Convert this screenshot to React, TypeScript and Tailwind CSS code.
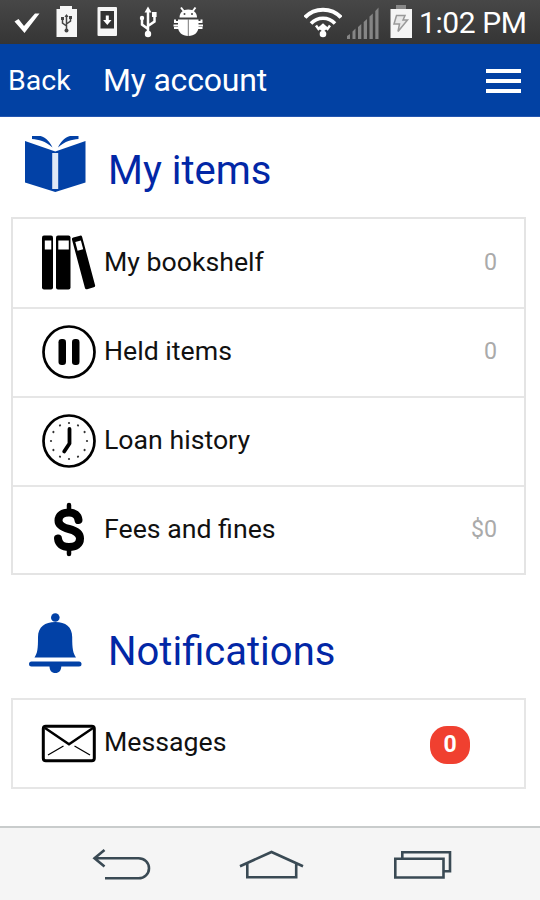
import { FC, ReactNode } from 'react';

const StatusBar: FC = () => (
  <div className="flex h-11 items-center bg-gradient-to-b from-[#474747] to-[#353535] text-white">
    <svg className="ml-[14px] h-11 w-[26px]" viewBox="14 0 26 44">
      <path d="M14.5 21.5 L18.5 19 L24 26 L35 13.5 L39.5 13.5 L24.5 33 Z" fill="#fff" />
    </svg>
    <svg className="ml-4 h-11 w-[21px]" viewBox="56 0 21 44">
      <path d="M60 6h12v3h5v28H56.500V9H60z" fill="#f6f6f6" />
      <path d="M66.500 15v15M66.500 26l-4-3v-4M66.500 24l4-3v-4" fill="none" stroke="#444" strokeWidth="1.500" />
      <path d="M64.500 17l2-3 2 3z" fill="#444" />
      <circle cx="66.500" cy="30.500" r="2" fill="#444" />
      <path d="M61 17h3v3h-3zM69 16h3v3h-3z" fill="#444" />
    </svg>
    <svg className="ml-5 h-11 w-5" viewBox="97 0 20 44">
      <rect x="97.500" y="7" width="19.500" height="29" rx="1" fill="#f6f6f6" />
      <rect x="100.500" y="11" width="13.500" height="17.500" fill="#333" />
      <path d="M105.800 15.500h3v4.500h2.700l-4.200 5-4.200-5h2.700z" fill="#fff" />
    </svg>
    <svg className="ml-[22px] h-11 w-[18px]" viewBox="139 0 18 44">
      <path d="M148 11v22M148 29l-6-4.500V18M148 26l6.500-4.500V15" fill="none" stroke="#fff" strokeWidth="2.500" />
      <path d="M144.500 12.500l3.500-6 3.500 6z" fill="#fff" />
      <circle cx="148" cy="34" r="3.200" fill="#fff" />
      <circle cx="142" cy="18" r="2.200" fill="#fff" />
      <rect x="152" y="12" width="4.600" height="5" fill="#fff" />
    </svg>
    <svg className="ml-4 h-11 w-[31px]" viewBox="173 0 31 44">
      <path d="M179.500 17.500c0-5 3.500-8 8.700-8s8.800 3 8.800 8z" fill="#fff" />
      <path d="M181 7.500l3 4M195.500 7.500l-3 4" stroke="#fff" strokeWidth="2" />
      <path d="M178 19.500h20.500v7.500c0 5-4 9-10.200 9s-10.300-4-10.300-9z" fill="#fff" />
      <path d="M188.300 19v17" stroke="#777" strokeWidth="1" />
      <path d="M179 22h-4v-2.500M179 25.500h-5.500M179 28h-4v-1M197.500 22h4v-2.500M197.500 25.500h5.500M197.500 28h4v-1" fill="none" stroke="#fff" strokeWidth="2" />
      <circle cx="184.500" cy="14" r="1" fill="#444" />
      <circle cx="192" cy="14" r="1" fill="#444" />
    </svg>
    <svg className="ml-[100px] h-11 w-[38px]" viewBox="304 0 38 44">
      <g fill="none" stroke="#fff">
        <path d="M305 17.500c9-10.500 27-10.500 36 0" strokeWidth="4" />
        <path d="M311 23.500c6.500-7 17.500-7 24 0" strokeWidth="3.500" />
        <path d="M316 25.500l2.500 3.500 4.500-4 4.500 4 2.500-3.500" strokeWidth="2.500" />
      </g>
      <path d="M318 28c3-3 7-3 10 0l-5 4z" fill="#fff" />
      <circle cx="323" cy="34" r="3.300" fill="#fff" />
    </svg>
    <svg className="ml-[5px] h-11 w-8" viewBox="347 0 32 44">
      <path d="M347 36l3-2v5h-3zM352.500 31.500l3-3V39h-3zM358 27l3.300-3V39H358zM363.700 22l3.300-3V39h-3.300zM369.500 16.500l3.300-3V39h-3.300zM375.300 11l3.200-3.500V39h-3.200z" fill="#858585" />
    </svg>
    <svg className="ml-[11px] h-11 w-[23px]" viewBox="390 0 23 44">
      <path d="M396 5h10v4h-10z" fill="#888" />
      <path d="M390.500 9h21.500v29h-21.500z" fill="#f5f5f5" />
      <path d="M396.500 15.500h8.500l-2 4.500h4.500l-9.500 11.500 1.500-7.500h-5.500z" fill="#e8e8e8" stroke="#999" strokeWidth="1.500" />
    </svg>
    <span className="ml-[6px] pt-px text-[30px] tracking-[-0.4px]">1:02 PM</span>
  </div>
);

const BookIcon = () => (
  <svg className="h-[58px] w-[62px]" viewBox="24 135 62 58" fill="#0241a6">
    <path d="M25 141l30.300 10.500L85.500 141v41.500L55.300 192 25 182.500z" />
    <path d="M52.200 153h6v36h-6z" fill="#dfe8f6" />
    <path d="M32 136h8.500c6 2 9.500 6 12 11.500C45 141 39 139.500 32 139zM78.500 136H70c-6 2-9.500 6-12 11.500 7.500-6.500 13.500-8 20.500-8.500z" />
  </svg>
);

const BellIcon = () => (
  <svg className="h-[60px] w-[54px]" viewBox="28 613 54 60" fill="#0241a6">
    <circle cx="55.300" cy="617.500" r="4.300" />
    <path d="M38 637c0-10 7-15 17.300-15s16.900 5 16.900 15c0 12 .8 16 3.800 20.500H34.500C37.500 653 38 649 38 637z" />
    <rect x="29" y="661.500" width="52.500" height="5" rx="2.500" />
    <path d="M49.500 666h11.800c0 4.500-2.300 7-6 7s-5.800-2.500-5.800-7z" />
  </svg>
);

const ShelfIcon = () => (
  <svg className="size-14" viewBox="41 234 56 56">
    <rect x="42" y="235.500" width="11" height="54" rx="2" />
    <rect x="56" y="235.500" width="14.500" height="54" rx="2" />
    <rect x="44.800" y="240.500" width="6.500" height="9" fill="#fff" />
    <rect x="58.300" y="240.500" width="10.500" height="9" fill="#fff" />
    <g transform="rotate(-15 77 237)">
      <rect x="71.500" y="236.500" width="10.500" height="53.500" rx="1.800" />
      <rect x="74" y="241.500" width="5.800" height="9" fill="#fff" />
    </g>
  </svg>
);

const PauseIcon = () => (
  <svg className="size-14" viewBox="41 323 56 56">
    <circle cx="69" cy="351" r="25.500" fill="none" stroke="#000" strokeWidth="2.700" />
    <rect x="58.500" y="338" width="7.500" height="26" rx="3.200" />
    <rect x="72" y="338" width="7.500" height="26" rx="3.200" />
  </svg>
);

const ClockIcon = () => (
  <svg className="size-14" viewBox="-28 -28 56 56">
    <circle r="25.500" fill="none" stroke="#000" strokeWidth="2.700" />
    {Array.from({ length: 12 }, (_, i) => (
      <circle key={i} cx="0" cy="-18" r="1.100" fill="#333" transform={`rotate(${i * 30})`} />
    ))}
    <path d="M.500-12V2.500L-4.800 10.500" fill="none" stroke="#000" strokeWidth="3.800" strokeLinecap="round" strokeLinejoin="round" />
  </svg>
);

const DollarIcon = () => (
  <svg className="size-14" viewBox="41 501 56 56" fill="none" stroke="#000" strokeLinecap="round">
    <path d="M69 505v6M69 548v6" strokeWidth="4.500" />
    <path d="M78.500 520c-.5-5-4-7.500-9.500-7.500-6 0-10.500 2.500-10.500 8 0 5 4.500 7 10.500 8.500s11 3.500 11 9.500-4.500 8.500-11 8.500-10.500-3-11-8.500" strokeWidth="8" />
  </svg>
);

const MailIcon = () => (
  <svg className="size-14" viewBox="41 715 56 56" fill="none" stroke="#000">
    <rect x="43.300" y="726.300" width="51" height="34.500" rx="2.500" strokeWidth="3" />
    <path d="M45 728l24 16.300L93 728" strokeWidth="2.500" />
    <path d="M63.500 746L48 755M74.500 746L90 755" strokeWidth="1.300" />
  </svg>
);

interface RowProps {
  icon: ReactNode;
  label: string;
  children?: ReactNode;
}

const Row: FC<RowProps> = ({ icon, label, children }) => (
  <li className="flex h-full items-center border-[#e6e6e6] pb-[2px] pl-7 not-first:border-t-2">
    {icon}
    <span className="ml-[7px] flex-1 pb-px text-[26.7px] leading-8 text-[#111]">{label}</span>
    {children}
  </li>
);

const Count: FC<{ value: string }> = ({ value }) => (
  <span className="mr-[27px] pb-px text-[23.2px] leading-8 text-[#aaa]">{value}</span>
);

const App: FC = () => (
  <div className="flex h-[900px] w-[540px] flex-col overflow-hidden bg-white font-['Roboto',sans-serif]">
    <StatusBar />

    <header className="flex h-[73px] items-center border-b border-[#2456b0] bg-[#0241a3] pl-2 pr-[19px] text-white">
      <span className="w-[95px] pt-[2px] text-[28.5px]">Back</span>
      <h1 className="flex-1 text-[32px] tracking-[-0.2px]">My account</h1>
      <div className="flex flex-col gap-[6px] pt-[2px]">
        <div className="h-1 w-[35px] bg-white" />
        <div className="h-1 w-[35px] bg-white" />
        <div className="h-1 w-[35px] bg-white" />
      </div>
    </header>

    <main className="flex-1">
      <div className="flex h-[100px] pl-6 pt-[18px]">
        <BookIcon />
        <h2 className="ml-[22px] mt-3 text-[40px] leading-[48px] text-[#0227a6]">My items</h2>
      </div>
      <ul className="ml-[11px] grid h-[358px] w-[515px] grid-rows-[88px_89px_89px_88px] border-2 border-[#e4e4e4]">
        <Row icon={<ShelfIcon />} label="My bookshelf">
          <Count value="0" />
        </Row>
        <Row icon={<PauseIcon />} label="Held items">
          <Count value="0" />
        </Row>
        <Row icon={<ClockIcon />} label="Loan history" />
        <Row icon={<DollarIcon />} label="Fees and fines">
          <Count value="$0" />
        </Row>
      </ul>

      <div className="flex h-[123px] pl-7 pt-[38px]">
        <BellIcon />
        <h2 className="ml-[26px] mt-[15px] text-[40px] leading-[48px] text-[#0227a6]">Notifications</h2>
      </div>
      <ul className="ml-[11px] grid h-[91px] w-[515px] border-2 border-[#e6e6e6]">
        <Row icon={<MailIcon />} label="Messages">
          <span className="mr-[54px] mt-[5px] flex h-[38px] w-10 items-center justify-center rounded-[17px] bg-[#f04030] pb-[2px] text-[23px] font-bold leading-none text-white">
            0
          </span>
        </Row>
      </ul>
    </main>

    <nav className="flex h-[74px] border-t-2 border-[#c9cccc] bg-[#f5f5f5] pl-[92px]">
      <svg className="h-[72px] w-[60px]" viewBox="92 828 60 72" fill="none" stroke="#3a4a54" strokeWidth="2.600">
        <path d="M104.500 850l-10 8.200 10 8.200M95 858.200h43.500c6 0 10.500 4.500 10.500 10s-4.500 10.100-10.500 10.100H105" />
      </svg>
      <svg className="ml-[87px] h-[72px] w-[66px]" viewBox="239 828 66 72" fill="none" stroke="#3a4a54" strokeWidth="2.600">
        <path d="M240 866.300l31.500-14.300 31.500 14.300M247.300 863v14.300h48.900V863" />
      </svg>
      <svg className="ml-[87px] h-[72px] w-[60px]" viewBox="392 828 60 72" fill="none" stroke="#3a4a54" strokeWidth="2.600">
        <path d="M395.300 858.800H443.500v18.700h-48.200z" />
        <path d="M402.300 858v-5.800H450v19h-6" />
      </svg>
    </nav>
  </div>
);

export default App;
